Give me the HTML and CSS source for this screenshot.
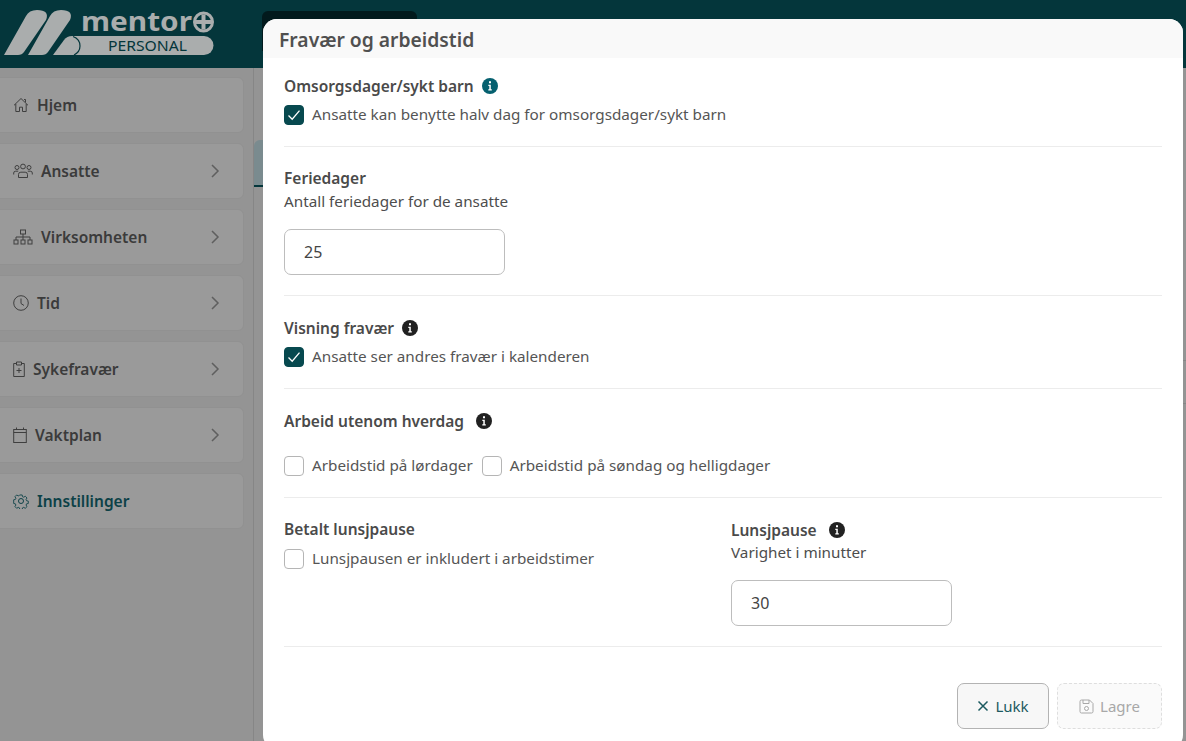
FILE: index.html
```html
<!DOCTYPE html>
<html lang="no">
<head>
<meta charset="utf-8">
<title>Fravær og arbeidstid</title>
<link rel="stylesheet" href="styles.css">
</head>
<body>
<div class="app">
  <header class="topbar">
    <svg class="logo" width="216" height="60" viewBox="0 0 216 60">
      <path class="logo-fill" d="M4 55 L26 16 Q29 10 37 10 Q50 10 46 20 L24 52 Q22 55 18 55Z"/>
      <path class="logo-fill" d="M28 55 L50 16 Q53 10 61 10 Q74 10 70 20 L48 52 Q46 55 42 55Z"/>
      <path class="logo-fill" d="M53 55 L64 40 Q67 36 72 36 H204 a9.500 9.500 0 0 1 0 19Z"/>
      <path class="logo-cut" d="M73 36.500 Q80 39 80 46 Q80 52 74 55"/>
      <text class="logo-word" x="81" y="31" textLength="111" lengthAdjust="spacingAndGlyphs">mentor</text>
      <circle class="logo-ring" cx="203.500" cy="22" r="9"/>
      <path class="logo-plus" d="M196 22H211M203.500 14.500V29.500"/>
      <text class="logo-sub" x="108" y="51" textLength="79" lengthAdjust="spacingAndGlyphs">PERSONAL</text>
    </svg>
    <div class="toptab"></div>
  </header>
  <div class="below">
    <nav class="sidebar">
      <a class="nav-item">
        <svg class="ic" width="16" height="16" viewBox="0 0 16 16"><path d="M1 8.300 8 1.500l7 6.800M2.800 7v7.500h3.700v-4.300h3v4.300h3.700V7M11 2.500h1.500v2.800"/></svg>
        <span>Hjem</span>
      </a>
      <a class="nav-item">
        <svg class="ic" width="20" height="16" viewBox="0 0 20 16"><circle cx="4" cy="4.500" r="2"/><circle cx="10" cy="3.500" r="2.400"/><circle cx="16" cy="4.500" r="2"/><path d="M.7 11.500V10q0-1.800 2-1.800h2.500M19.300 11.500V10q0-1.800-2-1.800h-2.500M5.500 14.500v-3q0-2.300 2.300-2.300h4.400q2.300 0 2.300 2.300v3z"/></svg>
        <span>Ansatte</span>
        <svg class="chev" width="10" height="16" viewBox="0 0 10 16"><path d="M2 2l6 6-6 6"/></svg>
      </a>
      <a class="nav-item">
        <svg class="ic" width="20" height="16" viewBox="0 0 20 16"><rect x="7.500" y="1" width="5" height="4"/><rect x="1" y="11" width="4" height="4"/><rect x="8" y="11" width="4" height="4"/><rect x="15" y="11" width="4" height="4"/><path d="M10 5v6M3 11V8h14v3"/></svg>
        <span>Virksomheten</span>
        <svg class="chev" width="10" height="16" viewBox="0 0 10 16"><path d="M2 2l6 6-6 6"/></svg>
      </a>
      <a class="nav-item">
        <svg class="ic" width="16" height="16" viewBox="0 0 16 16"><circle cx="8" cy="8" r="7.300"/><path d="M8 3.500V8.500l3 2"/></svg>
        <span>Tid</span>
        <svg class="chev" width="10" height="16" viewBox="0 0 10 16"><path d="M2 2l6 6-6 6"/></svg>
      </a>
      <a class="nav-item">
        <svg class="ic" width="12" height="16" viewBox="0 0 12 16"><path d="M3.500 2.500H.7v13h10.600v-13H8.500M3.500 1h5v3h-5zM6 7v5M3.500 9.500h5"/></svg>
        <span>Sykefravær</span>
        <svg class="chev" width="10" height="16" viewBox="0 0 10 16"><path d="M2 2l6 6-6 6"/></svg>
      </a>
      <a class="nav-item">
        <svg class="ic" width="14" height="16" viewBox="0 0 14 16"><rect x=".7" y="2.500" width="12.600" height="13"/><path d="M.7 5.500h12.600M3.500.5v2M10.500.5v2"/></svg>
        <span>Vaktplan</span>
        <svg class="chev" width="10" height="16" viewBox="0 0 10 16"><path d="M2 2l6 6-6 6"/></svg>
      </a>
      <a class="nav-item active">
        <svg class="ic" width="16" height="16" viewBox="0 0 16 16"><circle cx="8" cy="8" r="2.500"/><path d="M6.600 1h2.800l.4 2 1.400.6 1.800-1.100 2 2-1.100 1.800.6 1.400 2 .4v2.800l-2 .4-.6 1.400 1.100 1.800-2 2-1.800-1.100-1.400.6-.4 2H6.600l-.4-2-1.400-.6-1.800 1.100-2-2 1.100-1.800-.6-1.400-2-.4V6.600l2-.4.6-1.400-1.100-1.800 2-2 1.800 1.100 1.400-.6z" transform="translate(1.100 1.100) scale(.86)"/></svg>
        <span>Innstillinger</span>
      </a>
    </nav>
    <main class="content">
      <div class="tab"></div>
      <div class="row-line first"></div>
      <div class="row-line second"></div>
    </main>
  </div>

  <section class="modal">
    <h1 class="modal-title">Fravær og arbeidstid</h1>
    <div class="modal-body">
      <div class="group g1">
        <div class="label">Omsorgsdager/sykt barn
          <svg class="info teal" width="16" height="16" viewBox="0 0 16 16"><circle cx="8" cy="8" r="8"/><path class="i" d="M7 3.300h2v2H7zM6.300 6.700h2.500v4.500h1v1.400H6.300v-1.400h1V8.100h-1z"/></svg>
        </div>
        <label class="check-row"><span class="box on"><svg width="14" height="12" viewBox="0 0 14 12"><path d="M1.500 6.500l3.700 3.700 7.300-8.500"/></svg></span><span class="t">Ansatte kan benytte halv dag for omsorgsdager/sykt barn</span></label>
      </div>
      <div class="group g2">
        <div class="label">Feriedager</div>
        <div class="sub">Antall feriedager for de ansatte</div>
        <div class="field">25</div>
      </div>
      <div class="group g3">
        <div class="label">Visning fravær
          <svg class="info" width="16" height="16" viewBox="0 0 16 16"><circle cx="8" cy="8" r="8"/><path class="i" d="M7 3.300h2v2H7zM6.300 6.700h2.500v4.500h1v1.400H6.300v-1.400h1V8.100h-1z"/></svg>
        </div>
        <label class="check-row"><span class="box on"><svg width="14" height="12" viewBox="0 0 14 12"><path d="M1.500 6.500l3.700 3.700 7.300-8.500"/></svg></span><span class="t">Ansatte ser andres fravær i kalenderen</span></label>
      </div>
      <div class="group g4">
        <div class="label wide">Arbeid utenom hverdag
          <svg class="info" width="16" height="16" viewBox="0 0 16 16"><circle cx="8" cy="8" r="8"/><path class="i" d="M7 3.300h2v2H7zM6.300 6.700h2.500v4.500h1v1.400H6.300v-1.400h1V8.100h-1z"/></svg>
        </div>
        <div class="check-line">
          <label class="check-row"><span class="box"></span><span class="t">Arbeidstid på lørdager</span></label>
          <label class="check-row"><span class="box"></span><span class="t">Arbeidstid på søndag og helligdager</span></label>
        </div>
      </div>
      <div class="group g5">
        <div>
          <div class="label">Betalt lunsjpause</div>
          <label class="check-row"><span class="box"></span><span class="t">Lunsjpausen er inkludert i arbeidstimer</span></label>
        </div>
        <div class="col-right">
          <div class="label wide">Lunsjpause
            <svg class="info" width="16" height="16" viewBox="0 0 16 16"><circle cx="8" cy="8" r="8"/><path class="i" d="M7 3.300h2v2H7zM6.300 6.700h2.500v4.500h1v1.400H6.300v-1.400h1V8.100h-1z"/></svg>
          </div>
          <div class="sub">Varighet i minutter</div>
          <div class="field">30</div>
        </div>
      </div>
      <div class="actions">
        <button class="btn close"><svg width="12" height="12" viewBox="0 0 12 12"><path d="M1.500 1.500l9 9M10.500 1.500l-9 9"/></svg>Lukk</button>
        <button class="btn save"><svg width="15" height="15" viewBox="0 0 15 15"><path d="M1 2.500Q1 1 2.500 1h8L14 4.500v8q0 1.500-1.500 1.500h-10Q1 14 1 12.500zM4 1v3.500h6V1"/><circle cx="7.500" cy="9.500" r="2"/></svg>Lagre</button>
      </div>
    </div>
  </section>
</div>
</body>
</html>
```
FILE: styles.css
```css
* { box-sizing: border-box; }
html, body { margin: 0; height: 100%; overflow: hidden; }
body { font-family: "Noto Sans", "Open Sans", sans-serif; background: #949494; color: #444; }

.app { position: relative; width: 1186px; height: 741px; overflow: hidden; display: flex; flex-direction: column; }

.topbar { height: 68px; background: #04363b; display: flex; flex: none; }
.logo { flex: none; }
.logo-fill { fill: #aaadad; }
.logo-cut { fill: none; stroke: #04363b; stroke-width: 1.200; }
.logo-word { font-family: "Noto Sans", sans-serif; font-weight: 700; font-size: 27px; fill: #aaadad; }
.logo-ring { fill: none; stroke: #aaadad; stroke-width: 3; }
.logo-plus { fill: none; stroke: #aaadad; stroke-width: 4; }
.logo-sub { font-family: "Noto Sans", sans-serif; font-weight: 400; font-size: 15px; fill: #04363b; }
.toptab { width: 155px; height: 40px; margin: 11px 0 0 46px; background: #021a1d; border-radius: 6px 6px 0 0; }

.below { flex: 1; display: flex; min-height: 0; }
.sidebar { width: 254px; flex: none; padding: 9px 9px 0 0; border-right: 1px solid #868686; display: flex; flex-direction: column; gap: 10px; }
.nav-item { height: 56px; margin-left: -8px; padding-left: 20px; display: flex; align-items: center; gap: 8px; background: #9a9a9a; border: 1px solid #919191; border-radius: 6px; font-size: 15.500px; font-weight: 600; color: #3b3b3b; }
.nav-item span { flex: 1; }
.nav-item.active { color: #0c4147; }
.ic { flex: none; fill: none; stroke: #3f3f3f; stroke-width: 1; }
.active .ic { stroke: #0c4147; }
.chev { flex: none; margin-right: 23px; fill: none; stroke: #5f5f5f; stroke-width: 1.500; }

.content { flex: 1; position: relative; }
.tab { width: 11px; height: 47px; margin-top: 72px; background: #7a8b8f; border-bottom: 2px solid #04363b; border-radius: 6px 0 0 0; }
.row-line { position: absolute; right: 0; width: 3px; height: 1px; background: #868686; }
.row-line.first { top: 292px; }
.row-line.second { top: 335px; }

.modal { position: absolute; left: 263px; top: 19px; width: 920px; height: 730px; background: #fff; border-radius: 14px; overflow: hidden; }
.modal-title { margin: 0; height: 39px; padding: 9px 16px 0; background: #f9f9f9; font-size: 19.300px; line-height: 24px; font-weight: 600; color: #505050; }
.modal-body { padding: 0 21px; }

.group { border-bottom: 1px solid #ececec; }
.g1 { padding: 17px 0 21px; }
.g2 { padding: 20px 0 20px; }
.g3 { padding: 21px 0 21px; }
.g4 { padding: 21px 0 21px; }
.g5 { padding: 20px 0 20px; display: grid; grid-template-columns: 447px 1fr; }

.label { height: 22px; font-size: 15.500px; line-height: 22px; font-weight: 600; color: #4a4a4a; display: flex; align-items: center; gap: 8px; }
.label.wide { gap: 12px; }
.sub { height: 22px; margin-top: 1px; font-size: 15.250px; line-height: 22px; color: #4d4d4d; }
.col-right { padding-top: 1px; }
.col-right .sub { margin-top: 0; }

.info { flex: none; fill: #212121; }
.info.teal { fill: #05606f; }
.info .i { fill: #fff; }

.check-row { display: flex; align-items: center; gap: 8px; font-size: 15.250px; color: #555; }
.check-row .t { line-height: 18px; margin-bottom: 2px; }
.g1 .check-row, .g3 .check-row { margin-top: 8px; }
.g5 .check-row { margin-top: 9px; }
.check-line { display: flex; gap: 9px; margin-top: 24px; }
.box { width: 20px; height: 20px; flex: none; border: 1px solid #b5b5b5; border-radius: 4px; background: #fff; display: flex; align-items: center; justify-content: center; }
.box.on { background: #07494f; border-color: #07494f; }
.box svg { fill: none; stroke: #fff; stroke-width: 1.300; }

.field { width: 221px; height: 46px; margin-top: 17px; padding-left: 19px; border: 1px solid #bdbdbd; border-radius: 7px; font-size: 16px; line-height: 44px; color: #444; background: #fff; }

.actions { display: flex; justify-content: flex-end; gap: 8px; padding-top: 36px; }
.btn { height: 46px; display: flex; align-items: center; justify-content: center; gap: 6px; font-family: inherit; font-size: 15px; border-radius: 7px; padding: 0; }
.btn svg { fill: none; }
.close { width: 92px; background: #f7f7f7; border: 1px solid #b3b3b3; color: #1c5a60; }
.close svg { stroke: #1c5a60; stroke-width: 1.500; }
.save { width: 105px; background: #fafafa; border: 1px dashed #dedede; color: #a8a8a8; }
.save svg { stroke: #a8a8a8; stroke-width: 1; }
```
